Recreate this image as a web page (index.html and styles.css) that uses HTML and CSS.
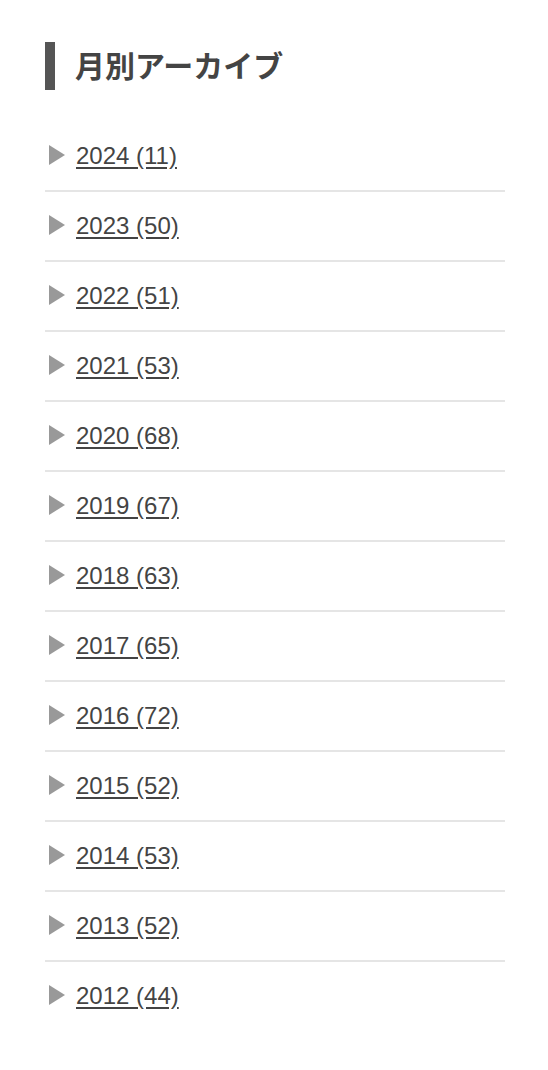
FILE: index.html
```html
<!DOCTYPE html>
<html lang="ja">
<head>
  <meta charset="UTF-8" />
  <title>月別アーカイブ</title>
  <link rel="stylesheet" href="styles.css">
</head>
<body>

  <div class="widget">
    <h2 class="widget-title">月別アーカイブ</h2>
    <ul class="archive-list">
      <li><a href="#">2024 (11)</a></li>
      <li><a href="#">2023 (50)</a></li>
      <li><a href="#">2022 (51)</a></li>
      <li><a href="#">2021 (53)</a></li>
      <li><a href="#">2020 (68)</a></li>
      <li><a href="#">2019 (67)</a></li>
      <li><a href="#">2018 (63)</a></li>
      <li><a href="#">2017 (65)</a></li>
      <li><a href="#">2016 (72)</a></li>
      <li><a href="#">2015 (52)</a></li>
      <li><a href="#">2014 (53)</a></li>
      <li><a href="#">2013 (52)</a></li>
      <li><a href="#">2012 (44)</a></li>
    </ul>
  </div>

</body>
</html>
```

FILE: styles.css
```css
body {
  margin: 0;
  padding: 0;
  background: #fff;
  color: #444;
  font-family: "Liberation Sans", "Noto Sans CJK JP", sans-serif;
}

.widget {
  padding: 42px 43px 0 45px;
}

.widget-title {
  margin: 0;
  height: 44px;
  padding-bottom: 4px;
  display: flex;
  align-items: center;
  padding-left: 20px;
  border-left: 10px solid #555;
  font-family: "Noto Sans CJK JP", sans-serif;
  font-size: 30px;
  font-weight: bold;
  color: #444;
  line-height: 1;
}

.archive-list {
  list-style: none;
  margin: 32px 0 0;
  padding: 0;
}

.archive-list li {
  display: flex;
  align-items: center;
  height: 68px;
  border-bottom: 2px solid #e5e5e5;
}

.archive-list li:last-child {
  border-bottom: none;
}

.archive-list li::before {
  content: "";
  width: 0;
  height: 0;
  margin-left: 4px;
  margin-right: 11px;
  margin-top: -2px;
  border-left: 16px solid #999;
  border-top: 10px solid transparent;
  border-bottom: 10px solid transparent;
}

.archive-list a {
  color: #444;
  font-size: 24px;
  text-decoration: underline;
  text-underline-offset: 3px;
}
```
